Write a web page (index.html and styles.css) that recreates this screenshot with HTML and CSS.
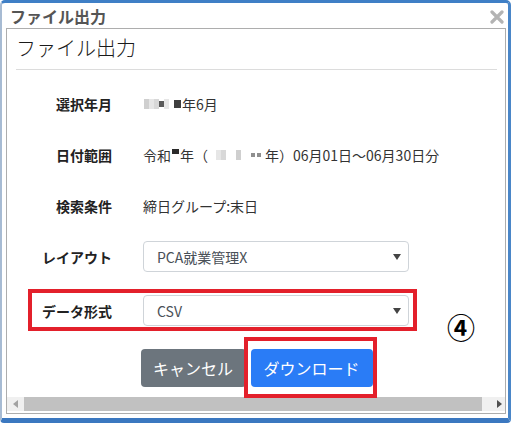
FILE: index.html
```html
<!DOCTYPE html>
<html lang="ja">
<head>
<meta charset="utf-8">
<title>ファイル出力</title>
<link rel="stylesheet" href="styles.css">
</head>
<body>
<div class="window">
  <div class="titlebar">
    <span class="title">ファイル出力</span>
    <svg class="close" width="14" height="14" viewBox="0 0 14 14"><path d="M2 2 L12 12 M12 2 L2 12" stroke="#b3b3b3" stroke-width="3.2" stroke-linecap="round"/></svg>
  </div>
  <div class="frame">
    <div class="content">
      <h1 class="heading">ファイル出力</h1>
      <hr class="rule">
      <div class="form">
        <div class="row">
          <div class="label">選択年月</div>
          <div class="value"><span class="mask"><i class="b l1"></i><i class="b l2"></i><i class="b l3"></i><i class="b d1"></i><i class="b l2"></i><i class="b gap"></i><i class="b d2"></i></span>年6月</div>
        </div>
        <div class="row">
          <div class="label">日付範囲</div>
          <div class="value">令和<span class="mask top"><i class="b d3"></i></span>年（<span class="mask wide"><i class="b gap"></i><i class="b l2"></i><i class="b l3"></i><i class="b gap"></i><i class="b gap"></i><i class="b l1"></i><i class="b gap"></i><i class="b gap"></i><i class="b m1"></i><i class="b m1"></i></span>年）06月01日～06月30日分</div>
        </div>
        <div class="row">
          <div class="label">検索条件</div>
          <div class="value">締日グループ:末日</div>
        </div>
        <div class="row">
          <div class="label">レイアウト</div>
          <div class="select"><span>PCA就業管理X</span><svg width="8" height="6" viewBox="0 0 8 6"><path d="M0 0 H8 L4 6 Z" fill="#444"/></svg></div>
        </div>
        <div class="row row-last">
          <div class="label">データ形式</div>
          <div class="select"><span>CSV</span><svg width="8" height="6" viewBox="0 0 8 6"><path d="M0 0 H8 L4 6 Z" fill="#444"/></svg></div>
        </div>
      </div>
      <div class="actions">
        <button class="btn btn-cancel">キャンセル</button>
        <button class="btn btn-primary">ダウンロード</button>
      </div>
    </div>
    <div class="hscroll">
      <svg class="arrow" width="5" height="8" viewBox="0 0 5 8"><path d="M5 0 V8 L0 4 Z" fill="#a3a3a3"/></svg>
      <div class="thumb"></div>
      <svg class="arrow" width="5" height="8" viewBox="0 0 5 8"><path d="M0 0 V8 L5 4 Z" fill="#505050"/></svg>
    </div>
  </div>
  <div class="mark mark-format"></div>
  <div class="mark mark-download"></div>
  <div class="step">④</div>
</div>
</body>
</html>
```
FILE: styles.css
```css
* { box-sizing: border-box; }
html, body { margin: 0; padding: 0; background: #fff; }
body {
  font-family: "Noto Sans CJK JP", "Noto Sans", sans-serif;
  color: #333;
}
.window {
  position: relative;
  width: 511px;
  height: 423px;
  border-style: solid;
  border-width: 3px 3px 5px 2px;
  border-color: #3f7fc6 #4a86c8 #3b78c0 #a7bbd3;
  border-radius: 5px 5px 4px 4px;
  padding: 0 2px 4px 4px;
  display: flex;
  flex-direction: column;
}
.titlebar {
  height: 25px;
  display: flex;
  align-items: center;
  justify-content: space-between;
  padding: 0 2px 0 4px;
}
.title {
  font-size: 16px;
  font-weight: bold;
  color: #555;
  line-height: 20px;
}
.close { display: block; margin-top: 2px; }
.frame {
  flex: 1;
  border: 1px solid #adadad;
  display: flex;
  flex-direction: column;
}
.content {
  flex: 1;
  padding: 0 8px 0 9px;
}
.heading {
  margin: 5px 0 0;
  font-size: 20px;
  font-weight: 300;
  line-height: 28px;
  color: #1a1a1a;
}
.rule {
  margin: 7px 0 0;
  border: 0;
  border-top: 1px solid #dcdcdc;
}
.form {
  display: flex;
  flex-direction: column;
  gap: 20px;
  margin-top: 18px;
}
.row {
  display: grid;
  grid-template-columns: 96px 266px;
  column-gap: 31px;
  height: 31px;
  align-items: center;
}
.row-last { margin-top: 3px; }
.label {
  text-align: right;
  font-size: 14px;
  font-weight: bold;
  color: #222;
  white-space: nowrap;
}
.value {
  font-size: 14px;
  color: #333;
  white-space: nowrap;
  display: flex;
  align-items: center;
}
.mask {
  display: inline-flex;
  align-items: center;
  height: 12px;
  margin: 0 1px;
}
.mask.top { align-items: flex-start; height: 14px; }
.mask.wide { margin: 0 2px 0 3px; }
.b { display: inline-block; width: 5px; height: 10px; }
.b.l1 { background: #cfcfcf; }
.b.l2 { background: #e6e6e6; }
.b.l3 { background: #d8d8d8; }
.b.d1 { background: #5a5a5a; height: 6px; }
.b.d2 { background: #3f3f3f; width: 7px; height: 8px; }
.b.d3 { background: #2a2a2a; width: 7px; height: 5px; margin-top: 1px; }
.b.m1 { background: #8f8f8f; height: 4px; width: 4px; margin-right: 2px; }
.b.gap { background: transparent; width: 5px; }
.select {
  height: 31px;
  border: 1px solid #cfd4d9;
  border-radius: 4px;
  display: flex;
  align-items: center;
  justify-content: space-between;
  padding: 0 7px 0 13px;
  font-size: 14px;
  color: #495057;
}
.select svg { display: block; }
.actions {
  display: flex;
  justify-content: center;
  gap: 5px;
  margin-top: 23px;
}
.btn {
  font-family: "Noto Sans CJK JP", "Noto Sans", sans-serif;
  font-size: 16px;
  line-height: 24px;
  height: 38px;
  padding: 7px 12px;
  border: 0;
  border-radius: 4px;
  color: #fff;
}
.btn-cancel { background: #6c757d; width: 105px; }
.btn-primary { background: #2a7cf6; width: 122px; }
.hscroll {
  height: 14px;
  margin-bottom: 2px;
  background: #f0f0f0;
  display: flex;
  align-items: center;
  padding: 0 3px 0 6px;
  gap: 6px;
}
.arrow { display: block; flex: none; }
.thumb {
  flex: 1;
  height: 14px;
  background: #c1c1c1;
  margin-right: 9px;
}
.mark {
  position: absolute;
  border: 4px solid #e3202b;
}
.mark-format { left: 26px; top: 286px; width: 389px; height: 42px; }
.mark-download { left: 242px; top: 334px; width: 133px; height: 61px; }
.step {
  position: absolute;
  left: 445px;
  top: 309px;
  font-size: 28px;
  font-weight: bold;
  line-height: 30px;
  color: #000;
}
```
